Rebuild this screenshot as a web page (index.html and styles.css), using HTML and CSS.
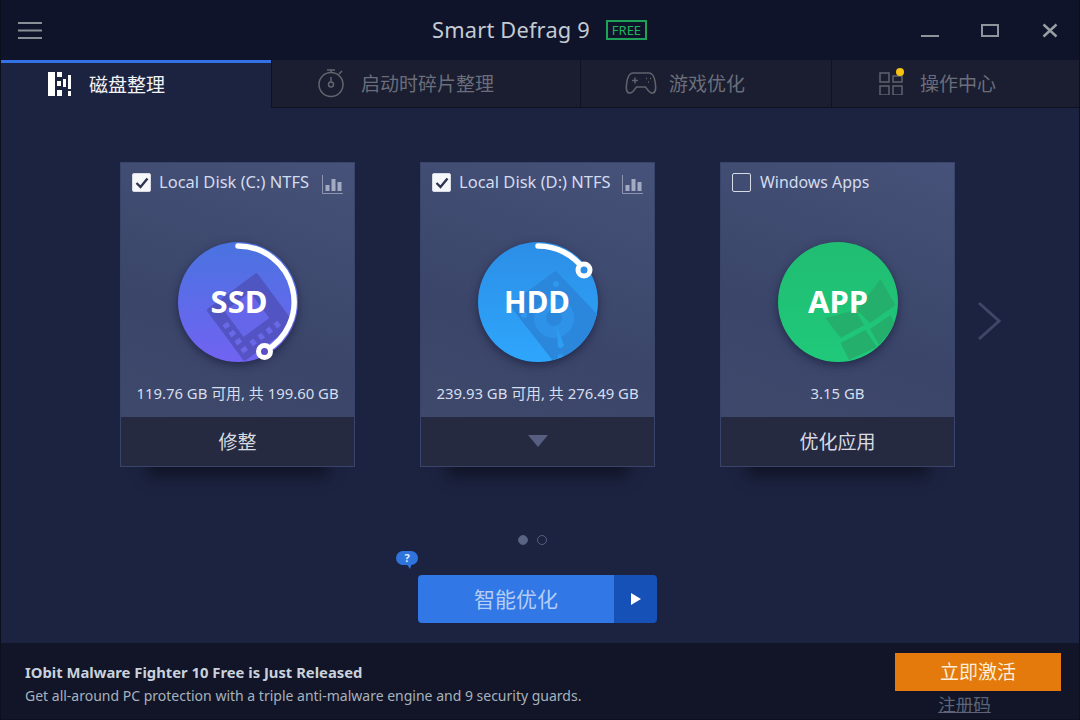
FILE: index.html
```html
<!DOCTYPE html>
<html lang="zh">
<head>
<meta charset="utf-8">
<title>Smart Defrag 9</title>
<link rel="stylesheet" href="styles.css">
</head>
<body>
<div class="window">
  <header class="titlebar">
    <svg class="menu" width="26" height="18" viewBox="0 0 26 18"><path d="M1 2h24M1 9.500h24M1 17h24" stroke="#8a8e95" stroke-width="2"/></svg>
    <div class="brand"><span class="brand-name">Smart Defrag 9</span><span class="badge">FREE</span></div>
    <div class="winctl">
      <svg width="20" height="20" viewBox="0 0 20 20"><path d="M1 16h18" stroke="#8f939b" stroke-width="2"/></svg>
      <svg width="20" height="20" viewBox="0 0 20 20"><path d="M2 5h16v11H2z" fill="none" stroke="#8f939b" stroke-width="2"/></svg>
      <svg width="20" height="20" viewBox="0 0 20 20"><path d="M3.500 4.500l13 12M16.500 4.500l-13 12" stroke="#9a9ea5" stroke-width="2.400"/></svg>
    </div>
  </header>
  <nav class="tabs">
    <div class="tab tab-active tab-disk">
      <svg width="26" height="26" viewBox="0 0 26 26" fill="#fff"><path d="M1 1h7v24H1zM10 1h5v5h-5zM10 10h4v5h-4zM10 19h5v6h-5zM16 8h3v8h-3zM21 4h3v14h-3zM21 20h3v5h-3z"/></svg>
      <span>磁盘整理</span>
    </div>
    <div class="tab tab-boot">
      <svg width="30" height="30" viewBox="0 0 30 30" fill="none" stroke="#62666f" stroke-width="1.500"><circle cx="14" cy="16.500" r="12"/><circle cx="14" cy="16.500" r="2.500"/><path d="M14 14V9M10 2h8M14 2v2.500M22 6l3-3"/></svg>
      <span>启动时碎片整理</span>
    </div>
    <div class="tab tab-game">
      <svg width="32" height="24" viewBox="0 0 32 24" fill="none" stroke="#5f636c" stroke-width="1.500"><path d="M8 2h16c3.500 0 5 3 6 8 1 6 1.500 11-2 12-3 1-5-3-7.500-6h-9c-2.500 3-4.500 7-7.500 6-3.500-1-3-6-2-12 1-5 2.500-8 6-8z"/><path d="M7 9.500h6M10 6.500v6M21 7.500h1M25 7.500h1M23 11h1"/></svg>
      <span>游戏优化</span>
    </div>
    <div class="tab tab-center">
      <span class="tab-icon"><svg width="24" height="24" viewBox="0 0 24 24" fill="none" stroke="#5f636c" stroke-width="1.500"><path d="M1 2h9v9H1zM1 15h9v9H1zM14 15h9v9h-9zM14 5h9v6h-9z"/></svg><i class="notify"></i></span>
      <span>操作中心</span>
    </div>
  </nav>
  <main class="main">
    <section class="cards">
      <article class="card">
        <div class="card-head">
          <span class="check check-on"><svg width="14" height="12" viewBox="0 0 14 12"><path d="M1.500 6l4 4 7-8.500" fill="none" stroke="#2d3350" stroke-width="2.400"/></svg></span>
          <span class="label">Local Disk (C:) NTFS</span>
          <svg class="chart" width="21" height="19" viewBox="0 0 21 19"><path d="M.5 0v18.500H21" fill="none" stroke="#8d95ae"/><path d="M3.500 10h4v6h-4zM9.500 4h4v12h-4zM15.500 7h4v9h-4z" fill="#a3abc2"/></svg>
        </div>
        <svg class="disc" width="130" height="130" viewBox="0 0 130 130">
          <defs>
            <linearGradient id="g1" x1="0" y1="0" x2="0" y2="1"><stop offset="0" stop-color="#4a73e0"/><stop offset="1" stop-color="#7163f2"/></linearGradient>
            <clipPath id="c1"><circle cx="65" cy="65" r="60"/></clipPath>
          </defs>
          <circle class="disc-base" cx="65" cy="65" r="60" fill="url(#g1)"/>
          <g clip-path="url(#c1)">
            <g transform="rotate(-36.500 77.500 80)">
              <rect x="46" y="48" width="63" height="64" rx="2" fill="#4c4cb0" opacity=".7"/>
              <rect x="60" y="60" width="32" height="32" fill="#6666ea"/>
              <path d="M50 70h6v5h-6zM50 80h6v5h-6zM50 90h6v5h-6zM50 100h6v5h-6zM62 99h5v6h-5zM72 99h5v6h-5zM82 99h5v6h-5zM92 99h5v6h-5z" fill="#6969e8"/>
            </g>
          </g>
          <path d="M65 9A56 56 0 0 1 91.500 114.400" fill="none" stroke="#fff" stroke-width="5.500" stroke-linecap="round"/>
          <circle cx="91.500" cy="114.500" r="6" fill="#5a50c4" stroke="#fff" stroke-width="5"/>
          <text class="disc-text" x="66" y="76" text-anchor="middle">SSD</text>
        </svg>
        <p class="usage">119.76 GB 可用, 共 199.60 GB</p>
        <div class="action">修整</div>
      </article>
      <article class="card">
        <div class="card-head">
          <span class="check check-on"><svg width="14" height="12" viewBox="0 0 14 12"><path d="M1.500 6l4 4 7-8.500" fill="none" stroke="#2d3350" stroke-width="2.400"/></svg></span>
          <span class="label">Local Disk (D:) NTFS</span>
          <svg class="chart" width="21" height="19" viewBox="0 0 21 19"><path d="M.5 0v18.500H21" fill="none" stroke="#8d95ae"/><path d="M3.500 10h4v6h-4zM9.500 4h4v12h-4zM15.500 7h4v9h-4z" fill="#a3abc2"/></svg>
        </div>
        <svg class="disc" width="130" height="130" viewBox="0 0 130 130">
          <defs>
            <linearGradient id="g2" x1="0" y1="0" x2="0" y2="1"><stop offset="0" stop-color="#2c8ee6"/><stop offset="1" stop-color="#2ea6fc"/></linearGradient>
            <clipPath id="c2"><circle cx="65" cy="65" r="60"/></clipPath>
          </defs>
          <circle class="disc-base" cx="65" cy="65" r="60" fill="url(#g2)"/>
          <g clip-path="url(#c2)">
            <path d="M82.500 35L37.500 68L90 135L140 95Z" fill="#2b87dc" stroke="#2b87dc" stroke-width="2" stroke-linejoin="round"/>
            <circle cx="81" cy="81" r="20" fill="#2d92e8"/>
            <circle cx="81" cy="81" r="8" fill="#2b87dc"/>
            <path d="M83 87L91 108a3.500 3.500 0 0 1-6 2z" fill="#2e9cf0"/>
            <path d="M80 47a3 3 0 1 0 6 0a3 3 0 1 0-6 0zM48 78a3 3 0 1 0 6 0a3 3 0 1 0-6 0zM84.500 120a3 3 0 1 0 6 0a3 3 0 1 0-6 0z" fill="#2e98ee"/>
          </g>
          <path d="M65 9A56 56 0 0 1 111.300 33" fill="none" stroke="#fff" stroke-width="5.500" stroke-linecap="round"/>
          <circle cx="111" cy="33" r="6" fill="#2c8ee6" stroke="#fff" stroke-width="5"/>
          <text class="disc-text disc-text-hdd" x="64" y="76" text-anchor="middle">HDD</text>
        </svg>
        <p class="usage">239.93 GB 可用, 共 276.49 GB</p>
        <div class="action"><svg width="20" height="12" viewBox="0 0 20 12"><path d="M0 0h20l-10 12z" fill="#575f80"/></svg></div>
      </article>
      <article class="card">
        <div class="card-head">
          <span class="check"></span>
          <span class="label label-apps">Windows Apps</span>
        </div>
        <svg class="disc" width="130" height="130" viewBox="0 0 130 130">
          <defs>
            <linearGradient id="g3" x1="0" y1="0" x2="0" y2="1"><stop offset="0" stop-color="#20bd72"/><stop offset="1" stop-color="#20c97a"/></linearGradient>
            <clipPath id="c3"><circle cx="65" cy="65" r="60"/></clipPath>
          </defs>
          <circle class="disc-base" cx="65" cy="65" r="60" fill="url(#g3)"/>
          <g clip-path="url(#c3)" fill="#24b06c">
            <path d="M107.500 42L122.500 68L97 86L84 73zM52.500 81L82.500 73L91 88L67.500 101zM67.500 106L92.500 93L104 110L76 123zM97 92L117.500 78L122.500 88L106 108z"/>
          </g>
          <text class="disc-text" x="65" y="76" text-anchor="middle">APP</text>
        </svg>
        <p class="usage">3.15 GB</p>
        <div class="action">优化应用</div>
      </article>
      <svg class="next" width="24" height="40" viewBox="0 0 24 40"><path d="M2 2l20 18L2 38" fill="none" stroke="#3e4766" stroke-width="3"/></svg>
    </section>
    <div class="dots"><i class="dot dot-on"></i><i class="dot"></i></div>
    <div class="start">
      <span class="help">?</span>
      <span class="start-main">智能优化</span>
      <span class="start-more"><svg width="10" height="12" viewBox="0 0 10 12"><path d="M0 0l10 6-10 6z" fill="#fff"/></svg></span>
    </div>
  </main>
  <footer class="footer">
    <div class="news">
      <strong class="news-title">IObit Malware Fighter 10 Free is Just Released</strong>
      <span class="news-text">Get all-around PC protection with a triple anti-malware engine and 9 security guards.</span>
    </div>
    <div class="activate">
      <span class="activate-btn">立即激活</span>
      <a class="register">注册码</a>
    </div>
  </footer>
</div>
</body>
</html>
```
FILE: styles.css
```css
* { box-sizing: border-box; }
html, body { margin: 0; height: 100%; }
body { font-family: "Noto Sans", "Noto Sans CJK SC", sans-serif; background: #0c0f1e; overflow: hidden; }
p { margin: 0; }

.window { width: 1080px; height: 720px; padding: 0 1px 1px; display: flex; flex-direction: column; }

.titlebar { height: 60px; flex: none; display: flex; align-items: center; padding: 0 19px 0 16px; background: #10142a; }
.menu { flex: none; }
.brand { display: flex; align-items: center; margin-left: 389px; }
.brand-name { font-size: 21.800px; color: #c3cbd3; line-height: 28px; letter-spacing: .2px; }
.badge { margin-left: 16px; border: 2px solid #1fa257; color: #1fb45f; font-size: 13px; line-height: 16px; height: 20px; width: 41px; text-align: center; }
.winctl { margin-left: auto; display: flex; gap: 40px; }

.tabs { height: 48px; flex: none; display: grid; grid-template-columns: 270px 308px 250px 1fr; gap: 1px; background: #0f1220; padding-bottom: 1px; }
.tab { display: flex; align-items: center; background: #1b1d30; color: #6a6e7b; font-size: 19px; padding-bottom: 2px; }
.tab-active { background: #1c2340; color: #f2f3f6; border-top: 3px solid #3272e4; padding-bottom: 3px; margin-bottom: -1px; }
.tab-disk { padding-left: 46px; gap: 16px; }
.tab-boot { padding-left: 45px; gap: 14px; }
.tab-game { padding-left: 44px; gap: 12px; }
.tab-center { padding-left: 47px; gap: 17px; }
.tab-icon { position: relative; display: flex; }
.notify { position: absolute; top: -3px; right: -1px; width: 8px; height: 8px; border-radius: 50%; background: #f7c210; }

.main { flex: 1; background: #1c2340; display: flex; flex-direction: column; align-items: flex-start; padding: 54px 0 0 119px; }
.cards { display: flex; gap: 65px; align-items: center; }
.card { width: 235px; height: 305px; display: flex; flex-direction: column; align-items: center; border: 1px solid #39446b; background: linear-gradient(200deg, #47527a 0%, #3a4569 55%, #3f4a6c 100%); box-shadow: 0 36px 14px -27px rgba(8, 10, 22, .6); }
.card-head { align-self: stretch; height: 39px; margin-bottom: 1px; flex: none; display: flex; align-items: center; padding: 0 11px; }
.check { width: 19px; height: 19px; flex: none; border: 1.500px solid #d7dbe6; border-radius: 2px; display: flex; align-items: center; justify-content: center; }
.check-on { background: #f6f7fa; }
.label { margin-left: 8px; margin-top: -2px; font-size: 16.500px; color: #d3dcef; white-space: nowrap; }
.label-apps { margin-left: 9px; font-size: 15.900px; }
.chart { margin-left: auto; margin-top: 3px; }
.disc { margin-top: 34px; flex: none; overflow: visible; }
.disc-base { filter: drop-shadow(0 3px 5px rgba(10, 12, 40, .5)); }
.disc-text { font-family: "Noto Sans", sans-serif; font-weight: 700; font-size: 31px; fill: #fff; }
.disc-text-hdd { font-size: 29.500px; }
.usage { margin-top: 16px; font-size: 14.900px; line-height: 20px; color: #d6deee; white-space: nowrap; }
.action { margin-top: auto; align-self: stretch; height: 49px; flex: none; display: flex; align-items: center; justify-content: center; background: #262a40; color: #d8dbe2; font-size: 19px; padding-bottom: 2px; }

.next { flex: none; margin-top: 13px; margin-left: -43px; }

.dots { align-self: stretch; display: flex; justify-content: center; gap: 9px; margin-top: 68px; margin-left: -119px; padding-right: 15px; }
.dot { width: 10px; height: 10px; border-radius: 50%; border: 1.500px solid #565e80; }
.dot-on { background: #5c6484; }

.start { position: relative; display: flex; width: 239px; height: 48px; margin-top: 30px; margin-left: 298px; }
.start-main { flex: 1; display: flex; align-items: center; justify-content: center; background: #3177e6; color: #b4cdf4; font-size: 21px; border-radius: 4px 0 0 4px; padding-bottom: 2px; }
.start-more { width: 43px; flex: none; display: flex; align-items: center; justify-content: center; background: #1651b8; border-radius: 0 4px 4px 0; }
.help { position: absolute; left: -22px; top: -24px; width: 22px; height: 14px; border-radius: 7px; background: #2f74dc; color: #e6eefb; font-size: 11px; font-weight: 700; line-height: 14px; text-align: center; }
.help::after { content: ""; position: absolute; left: 10px; top: 12px; border-left: 4px solid transparent; border-right: 2px solid transparent; border-top: 6px solid #2f74dc; }

.footer { height: 76px; flex: none; display: flex; justify-content: space-between; background: #111527; padding: 0 18px 0 24px; }
.news { display: flex; flex-direction: column; padding-top: 18px; }
.news-title { font-size: 14.800px; line-height: 22px; color: #c9d2dc; white-space: nowrap; }
.news-text { font-size: 14px; line-height: 26px; color: #a7b2bd; white-space: nowrap; }
.activate { width: 166px; display: flex; flex-direction: column; align-items: center; padding-top: 10px; }
.activate-btn { align-self: stretch; height: 38px; display: flex; align-items: center; justify-content: center; background: #e37a0b; color: #fbeedd; font-size: 19px; padding-bottom: 2px; }
.register { margin-top: 1px; margin-right: 27px; font-size: 17.500px; line-height: 24px; color: #5d6478; text-decoration: underline; }
```
